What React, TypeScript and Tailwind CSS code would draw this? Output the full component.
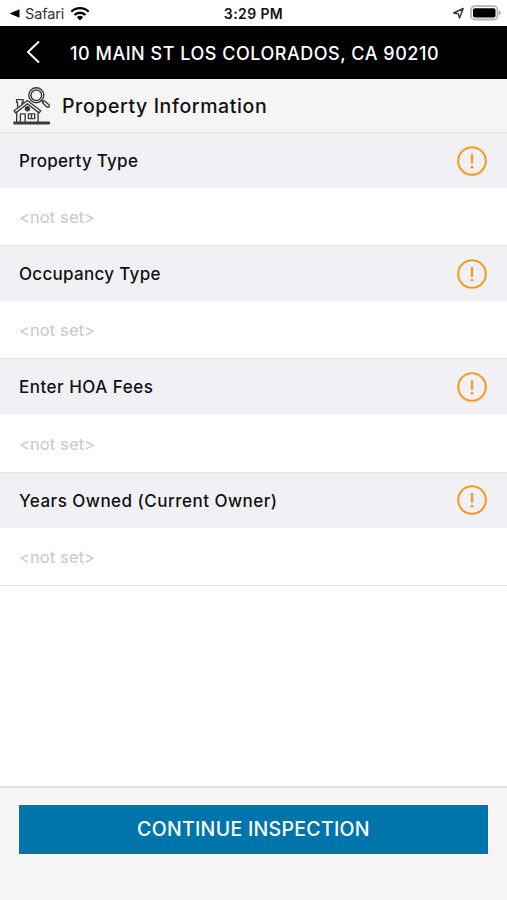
const fields = [
  { label: "Property Type", tracking: "tracking-[0.28px]" },
  { label: "Occupancy Type", tracking: "tracking-[0.3px]" },
  { label: "Enter HOA Fees", tracking: "tracking-[0.5px]" },
  { label: "Years Owned (Current Owner)", tracking: "tracking-[0.48px]" },
];

const WifiIcon = () => (
  <svg width="20" height="15" viewBox="0 0 20 15" fill="none" stroke="#000" strokeWidth="2.3">
    <path d="M1.3 5.7a12.4 12.4 0 0 1 17.4 0" />
    <path d="M4.5 9a7.8 7.8 0 0 1 11 0" />
    <path d="M10 14.4 6.9 11.3a4.5 4.5 0 0 1 6.2 0z" fill="#000" stroke="none" />
  </svg>
);

const BatteryIcon = () => (
  <svg width="32" height="16" viewBox="0 0 32 16">
    <rect x="1" y="1.2" width="26.5" height="13.3" rx="3.8" fill="#fff" stroke="#b4b4b4" strokeWidth="1.8" />
    <rect x="3" y="3.2" width="22.5" height="9.3" rx="1.8" fill="#000" />
    <path d="M28.8 5.3c2.6.8 2.6 4.1 0 4.9z" fill="#aaa" />
  </svg>
);

const HouseSearchIcon = () => (
  <svg width="38" height="40" viewBox="0 0 38 40" fill="none" stroke="#3c3c3c" strokeWidth="1.4" strokeLinejoin="round" strokeLinecap="round">
    <circle cx="23.3" cy="9.3" r="7.5" />
    <circle cx="23.3" cy="9.3" r="5.3" />
    <path d="m28.4 14.6 1.8 1.9M31.6 15l4.4 3.7c1.2 1.2-.7 3.4-2 2.3l-4.3-4.1c-1-1.1.8-3 1.9-1.9z" />
    <path d="M4.6 21v-4.6h-1v-2.8h6.5v2.8H9v1.4" />
    <path d="M14.4 14.5 1.1 24.8l1.6 2.1 11.7-9.1 11.7 9.1 1.6-2.1z" />
    <path d="M3.7 26.5v9.2M25.1 26.5v9.2" />
    <circle cx="14.4" cy="22.7" r="2" fill="#333" />
    <path d="M7.4 35.7v-7.8h4.8v7.8M15.4 27.9h6.3v4.7h-6.3zM18.5 27.9v4.7" />
    <path d="M1 36.2h28.3v1.5H1zM30 36.2h5.8c1 0 1 1.5 0 1.5H30z" />
  </svg>
);

const AlertIcon = () => (
  <svg width="30" height="30" viewBox="0 0 30 30" fill="none" stroke="#f79a1e" strokeWidth="2">
    <circle cx="15" cy="15" r="13.8" />
    <path d="M15 8v9.8" strokeWidth="2.3" />
    <circle cx="15" cy="21.2" r="1.4" fill="#f79a1e" stroke="none" />
  </svg>
);

const StatusBar = () => (
  <div className="h-[26px] shrink-0 pl-[9px] pr-[5px] flex items-center justify-between text-[#111]">
    <div className="flex-1 flex items-center">
      <svg width="11" height="9" viewBox="0 0 11 9" className="mr-[5px]">
        <path d="M.5 4.5 10.5.2v8.6z" />
      </svg>
      <span className="text-[14.5px] leading-5 tracking-[-0.15px] pt-px text-[#333]">Safari</span>
      <div className="ml-[6px]">
        <WifiIcon />
      </div>
    </div>
    <span className="text-sm font-semibold tracking-[0.4px] pt-px -ml-1">3:29 PM</span>
    <div className="flex-1 flex items-center justify-end gap-[5px]">
      <svg width="13" height="13" viewBox="0 0 13 13" fill="none" stroke="#333" strokeWidth="1.4" strokeLinejoin="round">
        <path d="M11.2 1.5 7.5 11 6.3 6.9 1.6 6z" />
      </svg>
      <BatteryIcon />
    </div>
  </div>
);

export default function App() {
  return (
    <div className="w-full h-screen flex flex-col bg-white overflow-hidden whitespace-nowrap font-['Inter','Liberation_Sans',sans-serif]">
      <StatusBar />

      <header className="h-[53px] shrink-0 bg-black text-white flex items-center pl-[26px]">
        <svg width="14" height="24" viewBox="0 0 14 24" fill="none" stroke="currentColor" strokeWidth="2" className="mr-[30px] mb-px">
          <path d="M13 1.5 2 12l11 10.5" />
        </svg>
        <h1 className="text-lg font-medium tracking-[0.52px] pt-[3px]">10 MAIN ST LOS COLORADOS, CA 90210</h1>
      </header>

      <div className="h-[54px] shrink-0 bg-[#f5f5f5] border-b border-[#e4e4e6] flex items-center pl-[13px] gap-[11px] text-[#111]">
        <HouseSearchIcon />
        <h2 className="text-[19.5px] font-medium tracking-[0.6px] pt-0.5">Property Information</h2>
      </div>

      <main className="flex-1">
        {fields.map((field) => (
          <section key={field.label} className="h-[113.2px] flex flex-col border-b border-[#e3e3e5]">
            <div className="h-[55px] bg-[#f0f0f5] flex items-center justify-between pl-[19px] pr-[20.5px] text-[#111]">
              <h3 className={`text-[17px] font-medium pt-[2.5px] ${field.tracking}`}>{field.label}</h3>
              <AlertIcon />
            </div>
            <p className="flex-1 flex items-center pl-[19px] pt-0.5 text-[16.5px] tracking-[0.1px] text-[#c8c8c8]">&lt;not set&gt;</p>
          </section>
        ))}
      </main>

      <footer className="h-[114px] shrink-0 bg-[#f5f5f5] border-t-2 border-[#dfdfdf] px-[19px] pt-[17px]">
        <button className="w-full h-[49px] bg-[#0075ac] text-white text-[19.5px] font-medium tracking-[0.3px] pt-px">
          CONTINUE INSPECTION
        </button>
      </footer>
    </div>
  );
}
